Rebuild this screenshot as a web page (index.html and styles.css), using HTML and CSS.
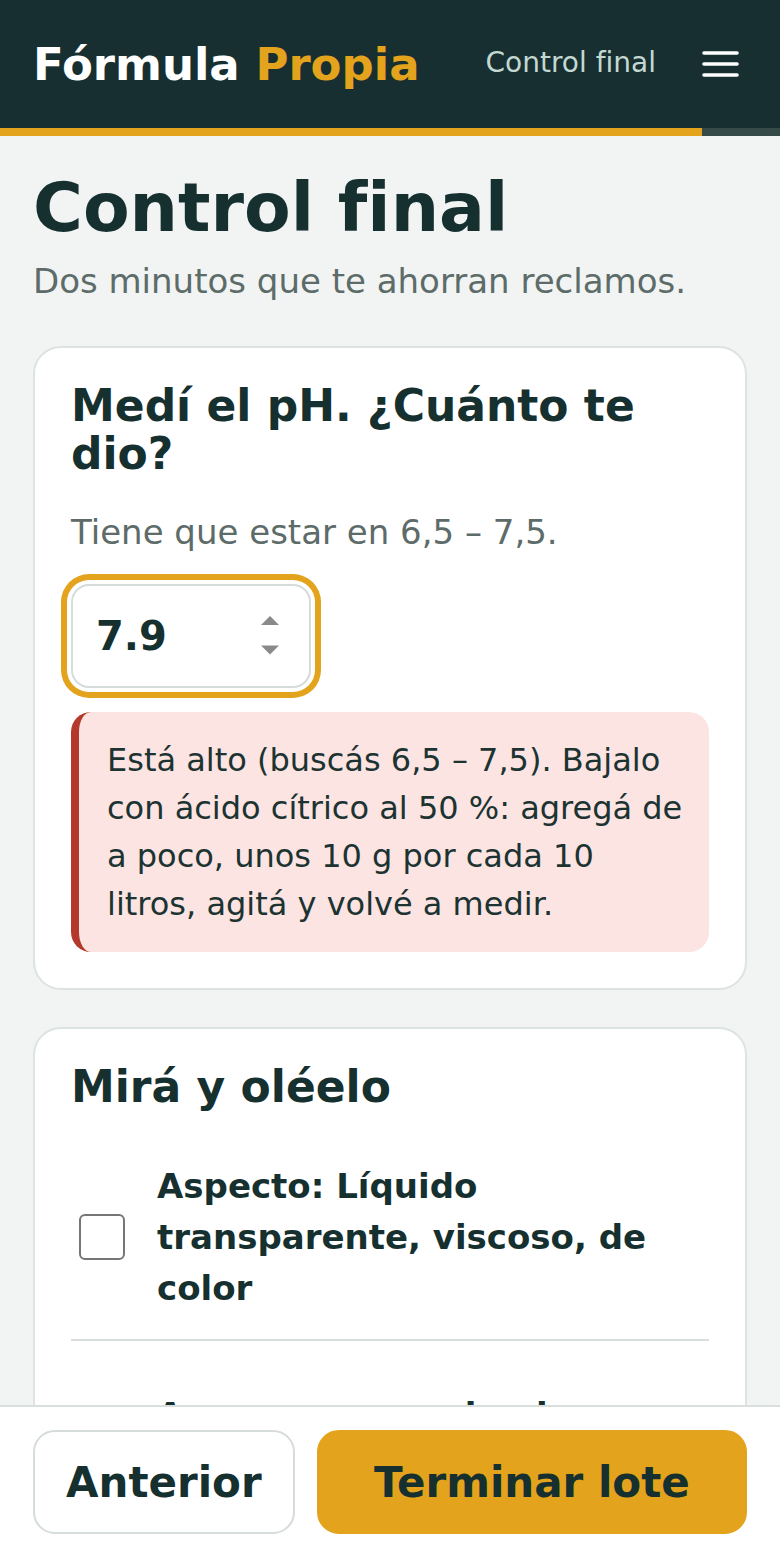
FILE: index.html
```html
<!DOCTYPE html>
<html lang="es">
<head>
<meta charset="utf-8">
<meta name="viewport" content="width=device-width, initial-scale=1">
<title>Control final · Fórmula Propia</title>
<link rel="stylesheet" href="styles.css">
</head>
<body>
<div class="app">
  <header class="topbar">
    <div class="brand">Fórmula <span class="brand-accent">Propia</span></div>
    <nav class="topnav">
      <span class="topnav-step">Control final</span>
      <button class="menu-btn" aria-label="Menú">
        <svg width="37" height="26" viewBox="0 0 37 26" aria-hidden="true">
          <g stroke="#ffffff" stroke-width="3.6" stroke-linecap="round">
            <line x1="2" y1="2" x2="35" y2="2"/>
            <line x1="2" y1="13" x2="35" y2="13"/>
            <line x1="2" y1="24" x2="35" y2="24"/>
          </g>
        </svg>
      </button>
    </nav>
  </header>
  <div class="progress"><div class="progress-fill" style="width:90%"></div></div>

  <main class="content">
    <h1 class="page-title">Control final</h1>
    <p class="page-sub">Dos minutos que te ahorran reclamos.</p>

    <section class="card">
      <h2 class="card-title">Medí el pH. ¿Cuánto te dio?</h2>
      <p class="card-hint">Tiene que estar en 6,5 – 7,5.</p>
      <div class="num-field is-focused">
        <input class="num-input" type="text" value="7.9" aria-label="pH medido">
        <svg class="spinner" width="18" height="39" viewBox="0 0 18 39" aria-hidden="true">
          <polygon points="9,0 18,9 0,9" fill="#8a8a8a"/>
          <polygon points="0,29.5 18,29.5 9,38.5" fill="#8a8a8a"/>
        </svg>
      </div>
      <div class="alert">Está alto (buscás 6,5 – 7,5). Bajalo con ácido cítrico al 50 %: agregá de a poco, unos 10 g por cada 10 litros, agitá y volvé a medir.</div>
    </section>

    <section class="card card-second">
      <h2 class="card-title card-title-tight">Mirá y oléelo</h2>
      <ul class="checklist">
        <li class="check-item">
          <span class="checkbox"></span>
          <span class="check-text">Aspecto: Líquido transparente, viscoso, de color</span>
        </li>
        <li class="check-item">
          <span class="checkbox"></span>
          <span class="check-text">Aroma: suave, sin olor a rancio ni a quemado</span>
        </li>
      </ul>
    </section>
  </main>

  <footer class="actions">
    <button class="btn btn-secondary">Anterior</button>
    <button class="btn btn-primary">Terminar lote</button>
  </footer>
</div>
</body>
</html>
```

FILE: styles.css
```css
* { box-sizing: border-box; }

html, body {
  margin: 0;
  padding: 0;
  height: 100%;
}

body {
  font-family: "DejaVu Sans", "Noto Sans", sans-serif;
  background: #f1f4f3;
  color: #163030;
}

.app {
  height: 100vh;
  display: flex;
  flex-direction: column;
}

/* Header */
.topbar {
  flex: none;
  height: 128px;
  background: #172f30;
  display: flex;
  align-items: center;
  justify-content: space-between;
  padding: 0 41px 0 33px;
}

.brand {
  font-size: 45px;
  font-weight: 700;
  color: #ffffff;
  line-height: 1;
}

.brand-accent { color: #e3a31c; }

.topnav {
  display: flex;
  align-items: center;
  gap: 46px;
}

.topnav-step {
  font-size: 28px;
  line-height: 1;
  color: #c3d8d2;
  margin-top: -3px;
}

.menu-btn {
  border: 0;
  background: none;
  padding: 0;
  display: flex;
  cursor: pointer;
}

.progress {
  flex: none;
  height: 8px;
  background: #364a47;
}

.progress-fill {
  height: 100%;
  background: #e3a31c;
}

/* Main */
.content {
  flex: 1;
  overflow: hidden;
  padding: 35px 33px 0 33px;
}

.page-title {
  margin: 0;
  font-size: 68px;
  font-weight: 700;
  line-height: 1.1;
  color: #163030;
}

.page-sub {
  margin: 10px 0 0;
  font-size: 34px;
  line-height: 1.5;
  color: #5d6b69;
}

.card {
  margin-top: 39px;
  background: #ffffff;
  border: 2px solid #dce3e1;
  border-radius: 28px;
  padding: 34px 36px 36px;
}

.card-second { margin-top: 37px; }

.card-title {
  margin: 0 0 28px;
  font-size: 44px;
  font-weight: 700;
  line-height: 1.1;
  color: #163030;
}

.card-title-tight { margin-bottom: 25px; }

.card-hint {
  margin: 0 0 26px;
  font-size: 34px;
  line-height: 1.5;
  color: #5d6b69;
}

.num-field {
  width: 240px;
  height: 104px;
  border: 2px solid #d5dcda;
  border-radius: 18px;
  background: #ffffff;
  display: flex;
  align-items: center;
  padding: 0 30px 0 23px;
  margin-bottom: 24px;
}

.num-field.is-focused {
  box-shadow: 0 0 0 4px #ffffff, 0 0 0 10px #e3a31c;
}

.num-input {
  flex: 1;
  min-width: 0;
  border: 0;
  outline: 0;
  background: transparent;
  padding: 0;
  font-family: inherit;
  font-size: 40px;
  font-weight: 700;
  color: #163030;
}

.spinner { flex: none; }

.alert {
  background: #fbe4e2;
  border-left: 8px solid #b5382c;
  border-radius: 20px;
  padding: 24px 16px 24px 28px;
  font-size: 32px;
  line-height: 1.5;
  color: #1c3331;
}

/* Checklist */
.checklist {
  list-style: none;
  margin: 0;
  padding: 0;
}

.check-item {
  display: flex;
  align-items: center;
  gap: 32px;
  padding: 25px 8px;
  border-bottom: 2px solid #d8dfdd;
}

.check-item + .check-item {
  margin-top: 24px;
}

.checkbox {
  flex: none;
  width: 46px;
  height: 46px;
  border: 2px solid #767676;
  border-radius: 6px;
  background: #ffffff;
}

.check-text {
  font-size: 34px;
  font-weight: 700;
  line-height: 1.5;
  color: #163030;
}

/* Footer actions */
.actions {
  flex: none;
  background: #ffffff;
  border-top: 2px solid #d8dfdd;
  padding: 23px 33px 26px;
  display: flex;
  gap: 22px;
}

.btn {
  height: 104px;
  border-radius: 22px;
  font-family: inherit;
  font-size: 42px;
  font-weight: 700;
  color: #163030;
  cursor: pointer;
}

.btn-secondary {
  flex: none;
  background: #ffffff;
  border: 2px solid #d5dcda;
  padding: 0 31px;
}

.btn-primary {
  flex: 1;
  background: #e3a31c;
  border: 2px solid #e3a31c;
  padding: 0 20px;
}
```
